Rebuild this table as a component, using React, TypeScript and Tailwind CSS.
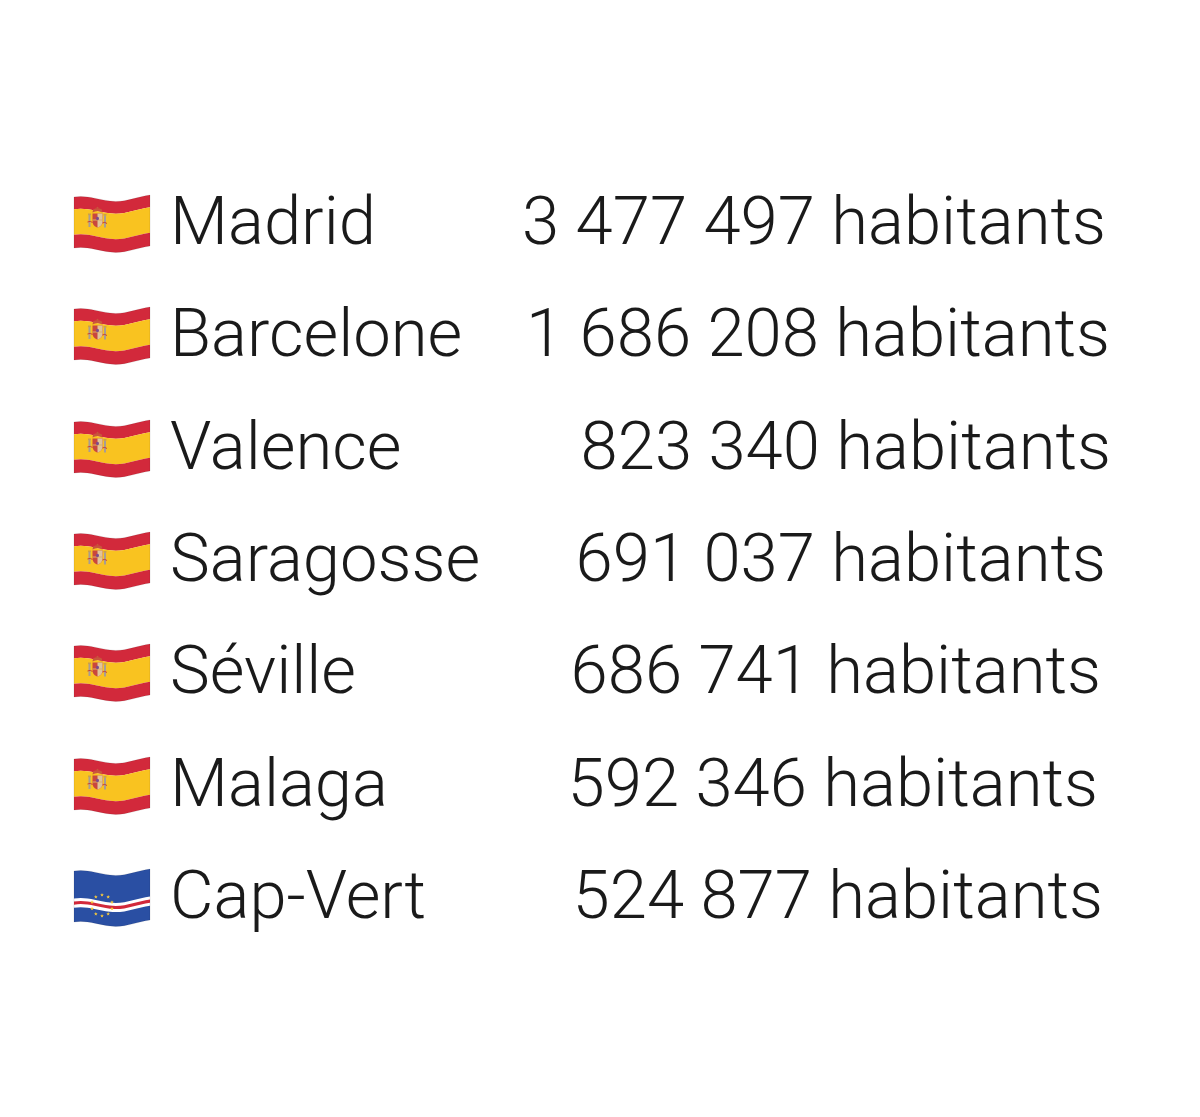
import React from "react";

// wave shape shared by every flag: top edge, bottom is the same curve moved down
const TOP = [
  [2, 5],
  [14, 3],
  [24, 7],
  [38, 9],
  [52, 11],
  [64, 5],
  [78, 3],
];
const H = 51;

const edge = (f: number) => TOP.map(([x, y]) => [x, +(y + f * H).toFixed(2)]);

const band = (f0: number, f1: number) => {
  const a = edge(f0);
  const b = edge(f1);
  const p = (q: number[]) => `${q[0]},${q[1]}`;
  return (
    `M${p(a[0])} C${p(a[1])} ${p(a[2])} ${p(a[3])} C${p(a[4])} ${p(a[5])} ${p(a[6])} ` +
    `L${p(b[6])} C${p(b[5])} ${p(b[4])} ${p(b[3])} C${p(b[2])} ${p(b[1])} ${p(b[0])} Z`
  );
};

const Star = ({ cx, cy, r }: { cx: number; cy: number; r: number }) => {
  const pts: string[] = [];
  for (let i = 0; i < 10; i++) {
    const ang = -Math.PI / 2 + (i * Math.PI) / 5;
    const rr = i % 2 === 0 ? r : r * 0.45;
    pts.push(`${(cx + rr * Math.cos(ang)).toFixed(2)},${(cy + rr * Math.sin(ang)).toFixed(2)}`);
  }
  return <polygon points={pts.join(" ")} fill="#f7c93b" />;
};

const SpainFlag = () => (
  <svg width="80" height="62" viewBox="0 0 80 62" className="shrink-0">
    <path d={band(0, 0.24)} fill="#d2293b" />
    <path d={band(0.24, 0.74)} fill="#f9c320" />
    <path d={band(0.74, 1)} fill="#d2293b" />
    {/* coat of arms */}
    <g>
      <rect x="16.5" y="23" width="2" height="12" fill="#a89c94" />
      <rect x="16" y="21.5" width="3" height="1.6" fill="#c9a04a" />
      <rect x="32" y="23.5" width="2" height="12" fill="#a89c94" />
      <rect x="31.5" y="22" width="3" height="1.6" fill="#c9a04a" />
      <path d="M15.5 30 q3 -1.5 5 0.5" stroke="#c6403a" strokeWidth="1" fill="none" />
      <path d="M30 31 q3 -1.5 5 0.5" stroke="#c6403a" strokeWidth="1" fill="none" />
      <path d="M20.5 20.5 q5 -3 10 0 l-0.6 -3 q-4.4 -2.4 -8.8 0 z" fill="#c8553c" />
      <circle cx="25.5" cy="15.8" r="1" fill="#c8553c" />
      <path d="M20.5 21.5 h10 v7.5 c0 4 -2.5 6 -5 6.5 c-2.5 -0.5 -5 -2.5 -5 -6.5 z" fill="#c9473d" />
      <path d="M25.5 21.5 h5 v7.5 c0 4 -2.5 6 -5 6.5 z" fill="#e0c49a" />
      <path d="M20.5 28 h10" stroke="#d9b26a" strokeWidth="1" />
      <ellipse cx="25.5" cy="26.5" rx="1.5" ry="1.7" fill="#7b4a8f" />
    </g>
    <path d={band(0, 1)} fill="none" stroke="#000" strokeOpacity="0.12" strokeWidth="0.8" />
  </svg>
);

const CapeVerdeFlag = () => {
  const stars = Array.from({ length: 10 }, (_, i) => {
    const ang = -Math.PI / 2 + (i * Math.PI * 2) / 10;
    return { cx: 30 + 10.5 * Math.cos(ang), cy: 39.5 + 10.5 * Math.sin(ang) };
  });
  return (
    <svg width="80" height="62" viewBox="0 0 80 62" className="shrink-0">
      <path d={band(0, 1)} fill="#2a4fa3" />
      <path d={band(0.54, 0.72)} fill="#ffffff" />
      <path d={band(0.6, 0.66)} fill="#d2293b" />
      {stars.map((s, i) => (
        <Star key={i} cx={s.cx} cy={s.cy} r={1.9} />
      ))}
      <path d={band(0, 1)} fill="none" stroke="#000" strokeOpacity="0.12" strokeWidth="0.8" />
    </svg>
  );
};

const cities = [
  { name: "Madrid", pop: "3 477 497", flag: "es", pr: "pr-[94px]" },
  { name: "Barcelone", pop: "1 686 208", flag: "es", pr: "pr-[90px]" },
  { name: "Valence", pop: "823 340", flag: "es", pr: "pr-[89px]" },
  { name: "Saragosse", pop: "691 037", flag: "es", pr: "pr-[94px]" },
  { name: "Séville", pop: "686 741", flag: "es", pr: "pr-[99px]" },
  { name: "Malaga", pop: "592 346", flag: "es", pr: "pr-[102px]" },
  { name: "Cap-Vert", pop: "524 877", flag: "cv", pr: "pr-[97px]" },
];

export default function App() {
  return (
    <div className="min-h-[1117px] w-[1200px] bg-white pt-[165px] font-['Roboto',sans-serif] text-[67px] font-light text-[#1a1a1a]">
      {cities.map((c) => (
        <div key={c.name} className="flex h-[112.33px] items-start pl-[72px]">
          <div className="mt-[27px]">{c.flag === "es" ? <SpainFlag /> : <CapeVerdeFlag />}</div>
          <span className="ml-[18px] leading-[112.33px] whitespace-nowrap">{c.name}</span>
          <span className={`flex-1 text-right leading-[112.33px] whitespace-nowrap ${c.pr}`}>
            {c.pop} habitants
          </span>
        </div>
      ))}
    </div>
  );
}
